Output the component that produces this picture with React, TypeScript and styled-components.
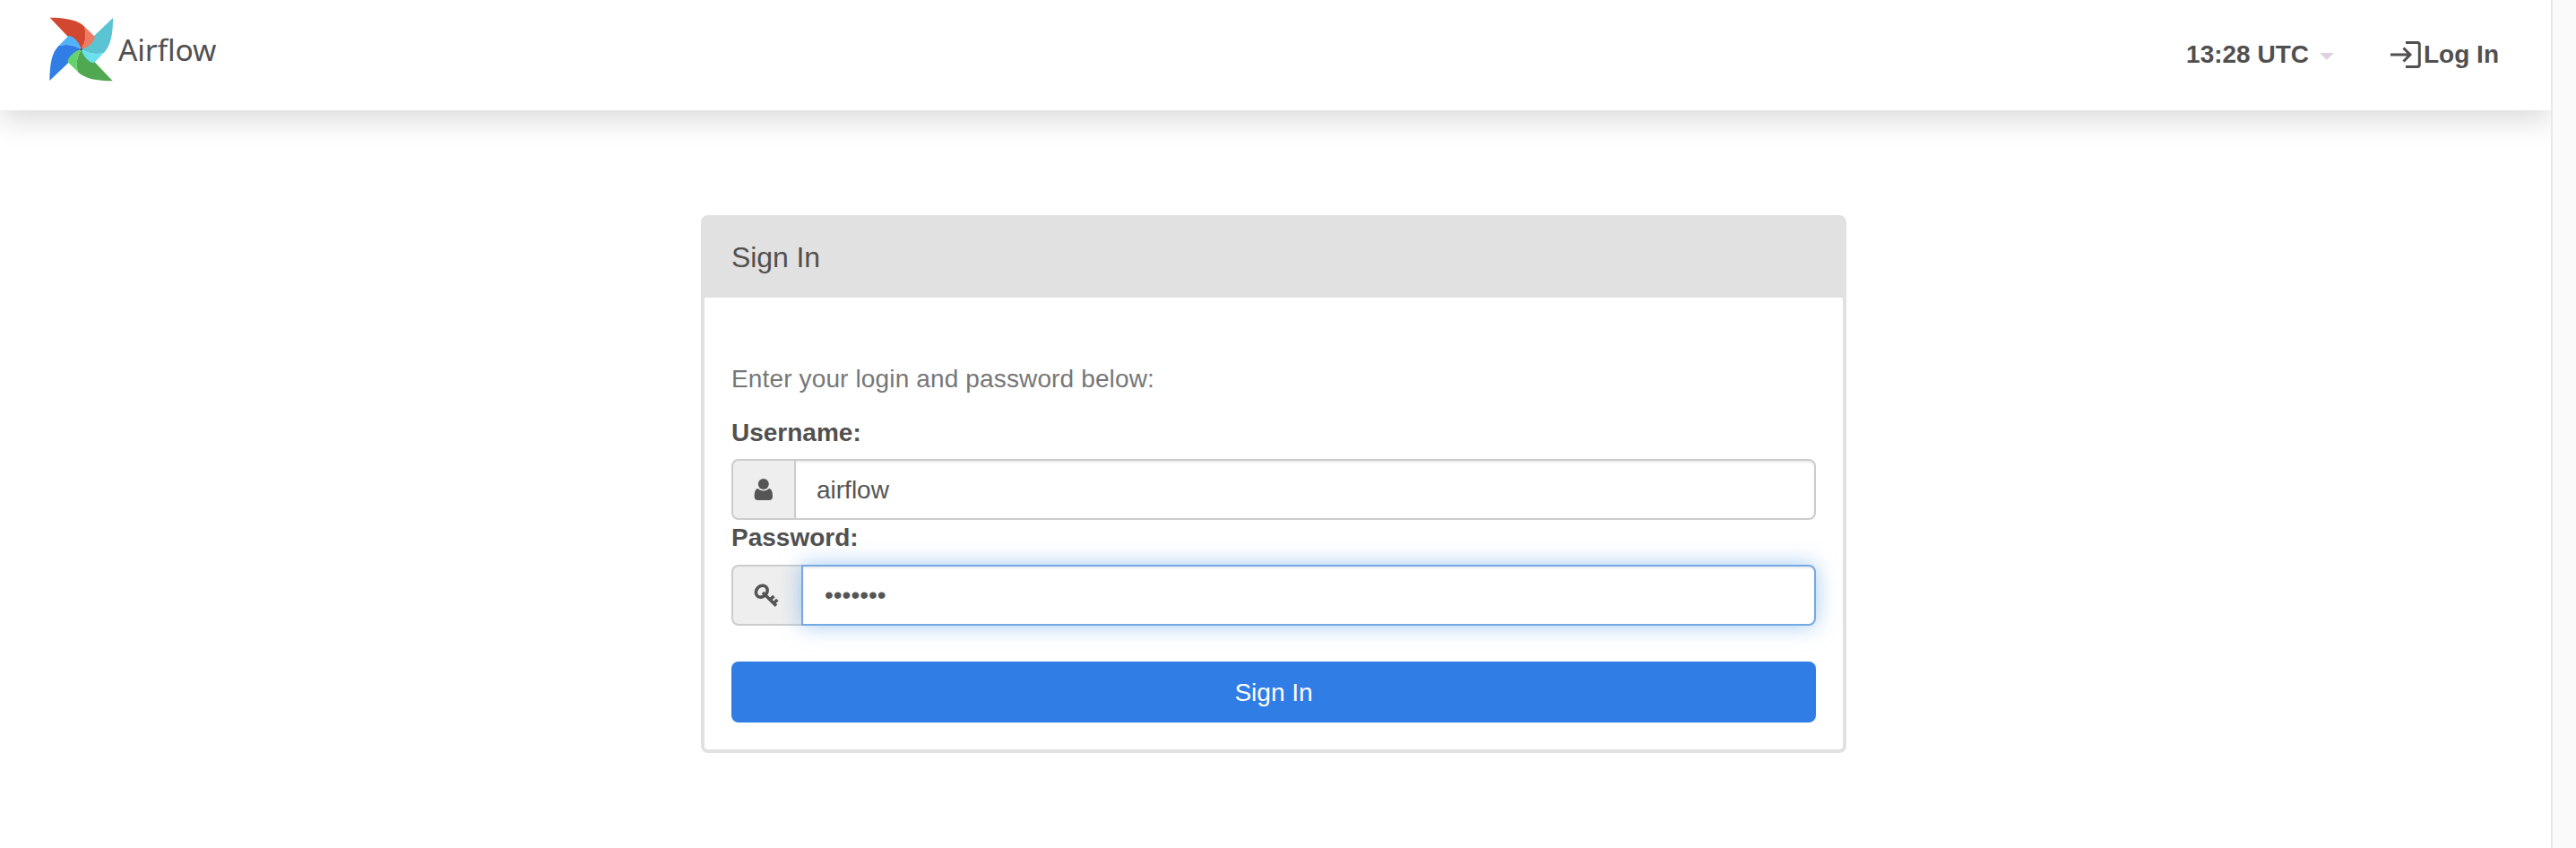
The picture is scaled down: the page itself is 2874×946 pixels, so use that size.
import React from "react";
import styled, { createGlobalStyle } from "styled-components";

const GlobalStyle = createGlobalStyle`
  *, *::before, *::after { box-sizing: border-box; }
  html, body { margin: 0; background: #fff; }
  body {
    font: 28px/40px "Liberation Sans", Arial, sans-serif;
    color: #51504f;
    overflow: hidden;
  }
`;

const Page = styled.div`
  display: flex;
  height: 946px;
`;

const Content = styled.div`
  flex: 1;
  display: flex;
  flex-direction: column;
  overflow: hidden;
`;

const ScrollTrack = styled.div`
  width: 28px;
  background: #fafafa;
  border-left: 2px solid #e8e8e8;
`;

const Navbar = styled.nav`
  height: 123px;
  flex: none;
  display: flex;
  justify-content: space-between;
  padding: 0 58px 0 55px;
  background: #fff;
  box-shadow: 0 12px 30px rgba(0, 0, 0, 0.14);
`;

const Brand = styled.a`
  display: flex;
  align-items: flex-start;
  padding-top: 19px;
`;

const Wordmark = styled.span`
  margin-left: 5px;
  padding-top: 14px;
  font: 33.5px/44px "Noto Sans", sans-serif;
  letter-spacing: -0.1px;
`;

const NavItems = styled.div`
  display: flex;
  align-items: flex-start;
  padding-top: 41px;
  font-weight: 700;
`;

const NavItem = styled.a`
  display: flex;
  align-items: center;
  height: 40px;
  margin-left: 62px;
  white-space: pre;
`;

const Caret = styled.span`
  margin: 3px 0 0 12px;
  border: 8px solid transparent;
  border-top-color: #ded2e0;
  border-bottom: 0;
`;

const Panel = styled.main`
  width: 1278px;
  height: 600px;
  margin: 117px 0 0 782px;
  border: 4px solid #e1e1e1;
  border-radius: 8px;
`;

const PanelHeading = styled.h1`
  margin: 0;
  height: 88px;
  padding: 21px 30px;
  background: #e1e1e1;
  font-size: 32px;
  font-weight: 400;
  line-height: 44px;
  letter-spacing: -0.1px;
`;

const Form = styled.form`
  display: flex;
  flex-direction: column;
  padding: 71px 30px 0;
`;

const Help = styled.p`
  margin: 0 0 20px;
  color: #777;
  letter-spacing: 0.14px;
`;

const Label = styled.label`
  height: 49px;
  font-weight: 700;
`;

const Field = styled.div`
  display: flex;
  height: 68px;

  & + ${Label} {
    height: 50px;
  }
`;

const Addon = styled.span<{ $width: number }>`
  display: flex;
  align-items: center;
  width: ${(p) => p.$width}px;
  padding-left: 23px;
  background: #eee;
  border: 2px solid #ccc;
  border-right: 0;
  border-radius: 8px 0 0 8px;
`;

const Input = styled.input<{ $focused?: boolean }>`
  flex: 1;
  min-width: 0;
  padding: ${(p) => (p.$focused ? "0 24px" : "1px 24px 0 23px")};
  font: inherit;
  color: #555;
  background: #fff;
  outline: none;
  border: 2px solid ${(p) => (p.$focused ? "#74aae3" : "#ccc")};
  border-radius: 0 8px 8px 0;
  box-shadow: inset 0 2px 2px rgba(0, 0, 0, 0.075)
    ${(p) => (p.$focused ? ", 0 0 24px rgba(102, 165, 233, 0.6)" : "")};
`;

const Submit = styled.button`
  height: 68px;
  margin-top: 40px;
  padding: 1px 0 0;
  border: 0;
  border-radius: 8px;
  background: #307de6;
  color: #fff;
  font: inherit;
`;

const blades = [
  { angle: 0, dark: "#d2472f", light: "#ee7b61" },
  { angle: 90, dark: "#5ac4d2", light: "#68e0ee" },
  { angle: 180, dark: "#50a850", light: "#64d36b" },
  { angle: 270, dark: "#307de6", light: "#51b3f8" },
];

const Pinwheel = () => (
  <svg width="72" height="72" viewBox="-107 -108 216 216">
    {blades.map((b) => (
      <path
        key={b.dark}
        transform={`rotate(${b.angle})`}
        fill={b.dark}
        d="M-105-106C-52-106-12-99 11-76Q23-37 0 0L-45-43Z"
      />
    ))}
    {blades.map((b) => (
      <path
        key={b.light}
        transform={`rotate(${b.angle})`}
        fill={b.light}
        d="M11-76L45-43C47-30 27-7 0 0Q23-37 11-76Z"
      />
    ))}
    <circle r="4" fill="#51504f" />
  </svg>
);

const LoginIcon = () => (
  <svg width="38" height="32" viewBox="0 0 38 32" fill="none" stroke="#51504f" strokeWidth="3">
    <path d="M1 16H22M15.5 8.5L23 16L15.5 23.5" />
    <path d="M18 2.4H31Q33.3 2.4 33.3 4.7V27.3Q33.3 29.6 31 29.6H18" />
  </svg>
);

const UserIcon = () => (
  <svg width="22" height="26" viewBox="0 0 22 26" fill="#555">
    <circle cx="10.8" cy="6.9" r="6" />
    <path d="M4.5 12.1Q7.4 14.6 10.8 14.6T17.1 12.1Q21 12.6 21 20.8Q21 25 17 25H4.6Q.6 25 .6 20.8Q.6 12.6 4.5 12.1Z" />
  </svg>
);

const KeyIcon = () => (
  <svg width="28" height="28" viewBox="0 0 28 28" fill="none" stroke="#555" strokeWidth="3.6">
    <ellipse cx="8.8" cy="9.7" rx="7" ry="5.8" transform="rotate(-45 8.8 9.7)" />
    <path d="M10 11L25 25.8M18.8 18.5L22.3 15M22.8 22.5L26.3 19" />
  </svg>
);

export default function App() {
  return (
    <>
      <GlobalStyle />
      <Page>
        <Content>
          <Navbar>
            <Brand>
              <Pinwheel />
              <Wordmark>Airflow</Wordmark>
            </Brand>
            <NavItems>
              <NavItem>
                13:28 UTC
                <Caret />
              </NavItem>
              <NavItem>
                <LoginIcon />
                Log In
              </NavItem>
            </NavItems>
          </Navbar>
          <Panel>
            <PanelHeading>Sign In</PanelHeading>
            <Form>
              <Help>Enter your login and password below:</Help>
              <Label htmlFor="username">Username:</Label>
              <Field>
                <Addon $width={70}>
                  <UserIcon />
                </Addon>
                <Input id="username" defaultValue="airflow" />
              </Field>
              <Label htmlFor="password">Password:</Label>
              <Field>
                <Addon $width={78}>
                  <KeyIcon />
                </Addon>
                <Input id="password" type="password" defaultValue="airflow" $focused />
              </Field>
              <Submit type="button">Sign In</Submit>
            </Form>
          </Panel>
        </Content>
        <ScrollTrack />
      </Page>
    </>
  );
}
